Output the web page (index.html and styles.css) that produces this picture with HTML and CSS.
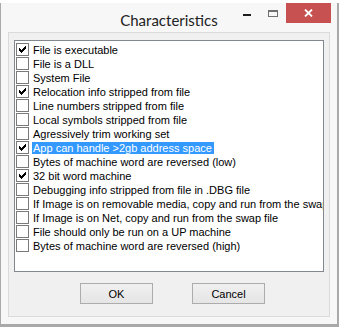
FILE: index.html
```html
<!DOCTYPE html>
<html lang="en">
<head>
    <meta charset="UTF-8">
    <title>Characteristics</title>
    <link rel="stylesheet" href="styles.css">
</head>
<body>
    <div class="backdrop"></div>
    <div class="window">
        <div class="titlebar">
            <span class="title">Characteristics</span>
            <div class="controls">
                <span class="ctl min"><i></i></span>
                <span class="ctl max"><i></i></span>
                <span class="ctl close">
                    <svg width="9" height="8" viewBox="0 0 9 8"><path d="M1 0.5L8 7.5M8 0.5L1 7.5" stroke="#fff" stroke-width="1.8"/></svg>
                </span>
            </div>
        </div>
        <div class="client">
            <div class="listbox">
                <ul class="checklist">
                    <li><span class="box checked"></span><span class="label">File is executable</span></li>
                    <li><span class="box"></span><span class="label">File is a DLL</span></li>
                    <li><span class="box"></span><span class="label">System File</span></li>
                    <li><span class="box checked"></span><span class="label">Relocation info stripped from file</span></li>
                    <li><span class="box"></span><span class="label">Line numbers stripped from file</span></li>
                    <li><span class="box"></span><span class="label">Local symbols stripped from file</span></li>
                    <li><span class="box"></span><span class="label">Agressively trim working set</span></li>
                    <li class="selected"><span class="box checked"></span><span class="label">App can handle &gt;2gb address space</span></li>
                    <li><span class="box"></span><span class="label">Bytes of machine word are reversed (low)</span></li>
                    <li><span class="box checked"></span><span class="label">32 bit word machine</span></li>
                    <li><span class="box"></span><span class="label">Debugging info stripped from file in .DBG file</span></li>
                    <li><span class="box"></span><span class="label">If Image is on removable media, copy and run from the swap file</span></li>
                    <li><span class="box"></span><span class="label">If Image is on Net, copy and run from the swap file</span></li>
                    <li><span class="box"></span><span class="label">File should only be run on a UP machine</span></li>
                    <li><span class="box"></span><span class="label">Bytes of machine word are reversed (high)</span></li>
                </ul>
            </div>
            <div class="buttons">
                <button>OK</button>
                <button>Cancel</button>
            </div>
        </div>
    </div>

    <script>
        // draw the classic 7x7 tick into every checked box
        const tick = '<svg width="7" height="7" viewBox="0 0 7 7" shape-rendering="crispEdges">' +
            '<path d="M0 2h1v3H0zM1 3h1v3H1zM2 4h1v3H2zM3 3h1v3H3zM4 2h1v3H4zM5 1h1v3H5zM6 0h1v3H6z" fill="#000"/></svg>';
        document.querySelectorAll('.box.checked').forEach(box => {
            box.innerHTML = tick;
        });
    </script>
</body>
</html>
```

FILE: styles.css
```css
:root {
    --frame: #f7f7f7;
    --client: #f0f0f0;
    --list-border: #828790;
    --select: #3399ff;
}
html, body {
    margin: 0;
    height: 100%;
}
body {
    background-color: #a9a9a9;
    overflow: hidden;
    font-family: 'Liberation Sans', Arial, sans-serif;
    font-size: 11px;
    color: #000;
}
.backdrop {
    height: 3px;
    background-color: #fff;
}
.window {
    width: 337px;
    height: 321px;
    box-sizing: border-box;
    border-left: 1px solid #a9a9a9;
    background-color: var(--frame);
}
.titlebar {
    height: 29px;
    display: grid;
    grid-template-columns: 1fr auto 1fr;
}
.title {
    grid-column: 2;
    font-family: 'Segoe UI', Lato, sans-serif;
    font-size: 15px;
    line-height: 15px;
    padding-top: 10px;
    color: #222;
}
.controls {
    grid-column: 3;
    justify-self: end;
    display: flex;
    margin-right: 6px;
    height: 20px;
}
.ctl {
    display: flex;
    align-items: center;
    justify-content: center;
}
.min {
    width: 25px;
}
.min i {
    display: block;
    width: 8px;
    height: 2px;
    margin-top: 4px;
    background-color: #1e1e1e;
}
.max {
    width: 27px;
}
.max i {
    display: block;
    width: 10px;
    height: 7px;
    box-sizing: border-box;
    border: 1px solid #707070;
    border-top-width: 2px;
}
.close {
    width: 45px;
    background-color: #c75050;
}
.client {
    width: 322px;
    height: 285px;
    box-sizing: border-box;
    margin-left: 7px;
    padding: 7px 0 0 5px;
    border: 1px solid #dadada;
    background-color: var(--client);
}
.listbox {
    width: 310px;
    height: 232px;
    box-sizing: border-box;
    border: 1px solid var(--list-border);
    background-color: #fff;
    overflow: hidden;
}
.checklist {
    list-style-type: none;
    margin: 0;
    padding: 1px 0 0 1px;
}
.checklist li {
    height: 14px;
    display: flex;
    align-items: flex-start;
    white-space: nowrap;
}
.box {
    flex: none;
    width: 13px;
    height: 13px;
    box-sizing: border-box;
    margin: 1px 3px 0 0;
    border: 1px solid #7a7a7a;
    background-color: #fff;
    display: flex;
    align-items: center;
    justify-content: center;
}
.label {
    line-height: 12px;
    margin-top: 2px;
    padding: 0 2px 0 1px;
}
.selected .label {
    background-color: var(--select);
    color: #fff;
}
.buttons {
    display: flex;
    gap: 39px;
    padding: 11px 0 0 66px;
}
button {
    width: 73px;
    height: 21px;
    padding: 0;
    border: 1px solid #acacac;
    background: linear-gradient(#f0f0f0, #e5e5e5);
    font-family: 'Liberation Sans', Arial, sans-serif;
    font-size: 11px;
    color: #000;
}
```
